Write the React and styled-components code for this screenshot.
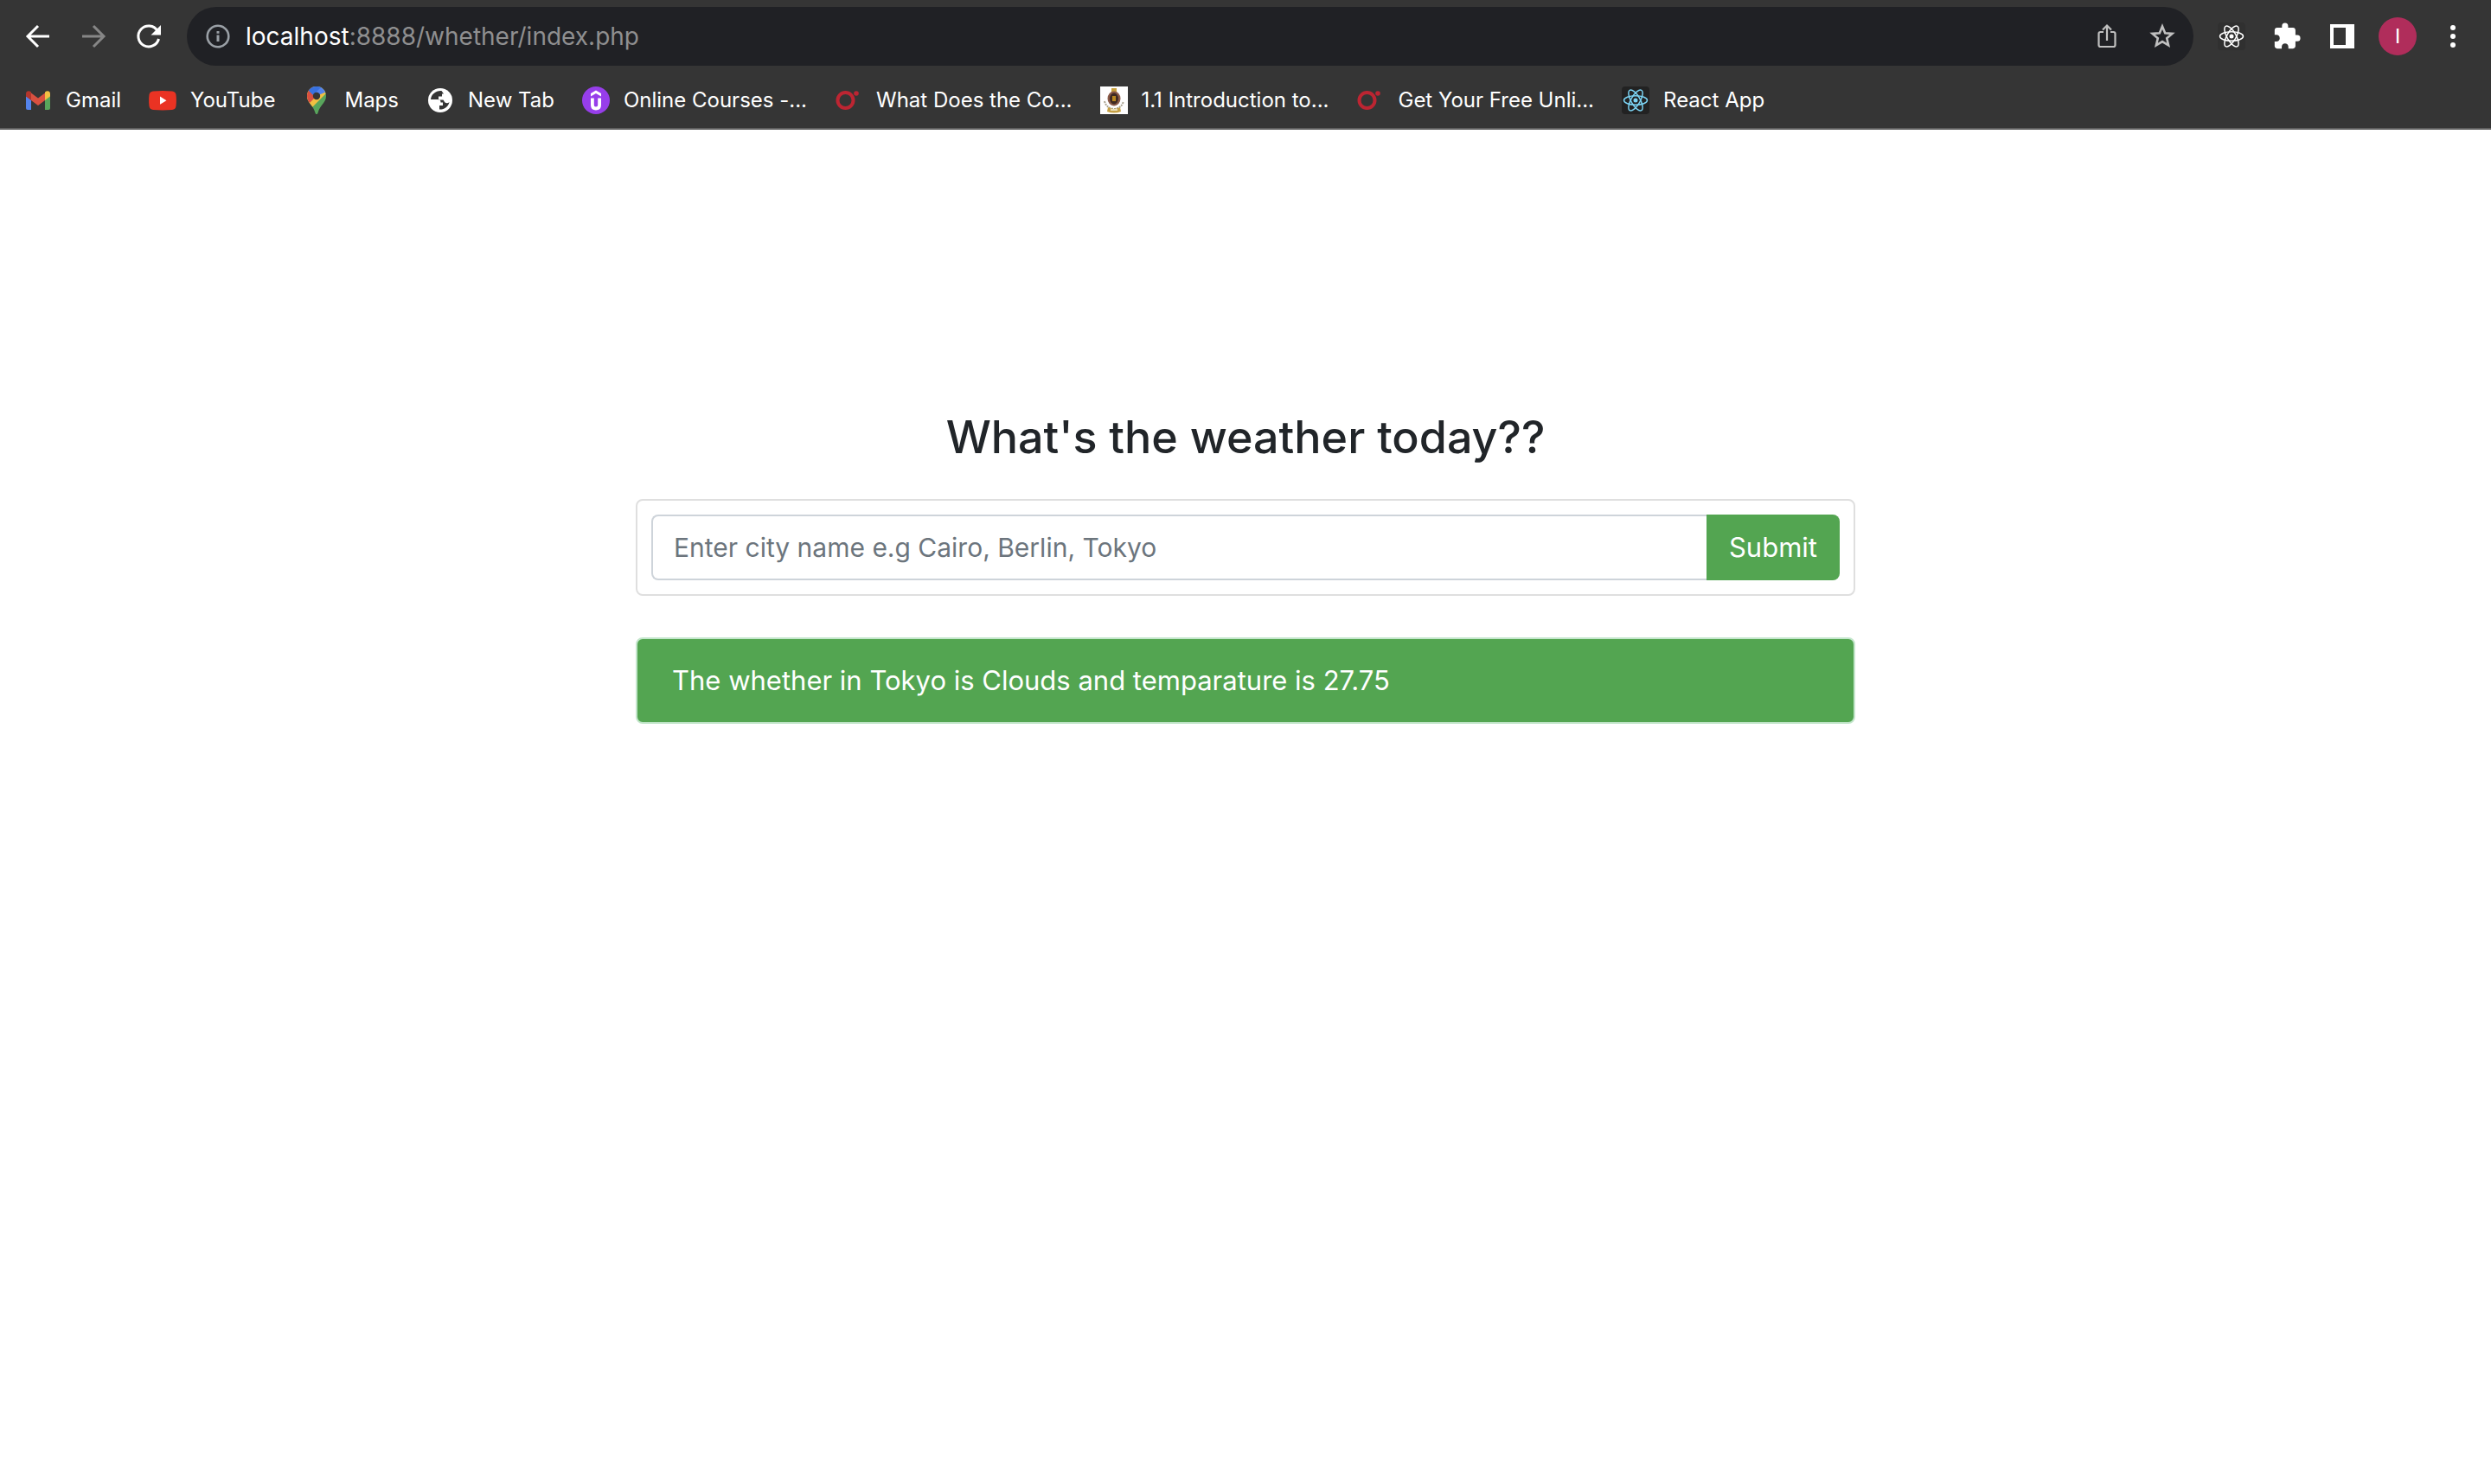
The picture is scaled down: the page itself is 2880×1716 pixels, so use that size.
import React from "react";
import styled, { createGlobalStyle } from "styled-components";

const Global = createGlobalStyle`
  *, *::before, *::after { box-sizing: border-box; }
  body { margin: 0; background: #fff; font-family: Inter, "Liberation Sans", sans-serif; }
`;

const Chrome = styled.header`
  background: #353535;
  border-bottom: 2px solid #5f5f5f;
`;
const Toolbar = styled.div`
  display: flex;
  align-items: center;
  padding: 8px 12px;
`;
const IconButton = styled.button`
  display: grid;
  place-items: center;
  flex: none;
  width: 64px;
  height: 64px;
  padding: 0;
  border: 0;
  background: none;
  color: ${(p) => p.$color || "#fff"};
`;
const AddressBar = styled.div`
  display: flex;
  align-items: center;
  flex: 1;
  height: 68px;
  margin: 0 12px;
  padding: 0 4px;
  border-radius: 34px;
  background: #202125;
`;
const Url = styled.div`
  flex: 1;
  font-size: 28px;
  line-height: 36px;
  color: #8f8f90;
`;
const Host = styled.span`
  color: #fff;
`;
const Avatar = styled.span`
  display: grid;
  place-items: center;
  width: 44px;
  height: 44px;
  border-radius: 50%;
  background: #b02d5b;
  color: #fff;
  font-size: 24px;
`;
const Bookmarks = styled.nav`
  display: flex;
  align-items: center;
  gap: 32px;
  height: 64px;
  padding: 0 28px;
`;
const Bookmark = styled.a`
  display: flex;
  align-items: center;
  gap: 16px;
  color: #fff;
  font-size: 24px;
  line-height: 32px;
  text-decoration: none;
  white-space: nowrap;
`;

const Page = styled.main`
  width: 1410px;
  max-width: 100%;
  margin: 0 auto;
  padding-top: 322px;
`;
const Title = styled.h1`
  margin: 0 0 37px;
  color: #212529;
  font-size: 52px;
  font-weight: 500;
  line-height: 68px;
  text-align: center;
`;
const Card = styled.form`
  display: flex;
  margin-bottom: 48px;
  padding: 16px;
  border: 2px solid #dfdfdf;
  border-radius: 8px;
`;
const City = styled.input`
  flex: 1;
  min-width: 0;
  height: 76px;
  padding: 0 24px;
  border: 2px solid #ced4da;
  border-right: 0;
  border-radius: 8px 0 0 8px;
  color: #212529;
  font: 30px/48px Inter, "Liberation Sans", sans-serif;
  &::placeholder { color: #6c757d; opacity: 1; }
`;
const Submit = styled.button`
  width: 154px;
  padding: 0;
  border: 0;
  border-radius: 0 8px 8px 0;
  background: #53a551;
  color: #fff;
  font: 31px/48px Inter, "Liberation Sans", sans-serif;
`;
const Alert = styled.p`
  margin: 0;
  padding: 24px 40px;
  border: 2px solid #c3e6cb;
  border-radius: 8px;
  background: #53a551;
  color: #fff;
  font-size: 31px;
  line-height: 48px;
`;

const Svg = ({ size = 32, box = size, children, ...rest }) => (
  <svg width={size} height={size} viewBox={`0 0 ${box} ${box}`} fill="none" aria-hidden="true" {...rest}>
    {children}
  </svg>
);
const Atom = ({ color, background, dot }) => (
  <Svg stroke={color} strokeWidth="1.5">
    <rect width="32" height="32" rx="4" fill={background} stroke="none" />
    <ellipse cx="16" cy="16" rx="13.5" ry="5.2" />
    <ellipse cx="16" cy="16" rx="13.5" ry="5.2" transform="rotate(60 16 16)" />
    <ellipse cx="16" cy="16" rx="13.5" ry="5.2" transform="rotate(120 16 16)" />
    <circle cx="16" cy="16" r={dot} fill={color} stroke="none" />
  </Svg>
);
const Gmail = () => (
  <Svg>
    <path d="M2 11l6 4.500V27H4a2 2 0 0 1-2-2z" fill="#5383ec" />
    <path d="M24 15.500L30 11v14a2 2 0 0 1-2 2h-4z" fill="#58a55c" />
    <path d="M8 7.500l8 6 8-6v8.500l-8 6-8-6z" fill="#d95040" />
    <path d="M2 8.500C2 5 5.500 4.200 8 6.500V16l-6-4.500z" fill="#b3362c" />
    <path d="M30 8.500C30 5 26.500 4.200 24 6.500V16l6-4.500z" fill="#f2bf42" />
  </Svg>
);
const YouTube = () => (
  <Svg>
    <path d="M5 5.500q11-1 22 0 4 .5 4.500 4 .8 6.500 0 13-.5 4-4.500 4.500-11 .8-22 0-4-.5-4.500-4.500-.8-6.500 0-13 .5-3.500 4.500-4z" fill="#ea3323" />
    <path d="M13 11.500l7.500 4.700-7.500 4.600z" fill="#fff" />
  </Svg>
);
const Maps = () => (
  <Svg>
    <clipPath id="pin"><path d="M16 0c6.200 0 11 4.800 11 11 0 8-6.500 9.500-9.500 19.500-.5 2-2.500 2-3 0C11.500 20.500 5 19 5 11 5 4.800 9.800 0 16 0z" /></clipPath>
    <g clipPath="url(#pin)">
      <path d="M0 0h32v32H0z" fill="#58a55c" />
      <path d="M0 0h32v3L9 26 0 22z" fill="#f2bf42" />
      <path d="M0 0h12l4 11-9 9-7-4z" fill="#d95040" />
      <path d="M7 3l9-5h14v7L16 11z" fill="#5383ec" />
      <path d="M6 4l8-6 6 2 1 1-9 9z" fill="#3871e0" />
    </g>
    <circle cx="16" cy="11" r="4.200" fill="#353535" />
  </Svg>
);
const Globe = () => (
  <Svg>
    <circle cx="16" cy="16" r="14" fill="#fff" />
    <path d="M17.500 5C11 4.500 5.500 9 5 15h8.500c2.500 0 3 1.500 3 3.500h2.500v3.500h-4v4.500c5 .5 10.500-3 11.500-8.500-1.500 1.500-3.500 1.500-5 .5-1.500-1-1-3-2.500-3h-5v-4h4V8.500h2z" fill="#353535" />
  </Svg>
);
const Udemy = () => (
  <Svg>
    <circle cx="16" cy="16" r="16" fill="#973eea" />
    <path d="M10 8l6-3.500L22 8v3.500l-6-3.500-6 3.500z" fill="#fff" />
    <path d="M11.900 13.500v8q0 4 4.100 4t4.100-4v-8" stroke="#fff" strokeWidth="3.800" />
  </Svg>
);
const Ring = () => (
  <Svg>
    <circle cx="12.500" cy="16" r="9" stroke="#bd2532" strokeWidth="4" />
    <circle cx="25" cy="8" r="2.800" fill="#bd2532" />
  </Svg>
);
const Crest = () => (
  <Svg>
    <path d="M0 0h32v32H0z" fill="#fff" />
    <path d="M13 2h6v4h-6z" fill="#c9a13b" />
    <ellipse cx="16" cy="14" rx="7.500" ry="8.500" fill="#8a5a48" />
    <ellipse cx="16" cy="14" rx="5" ry="6.500" fill="#3f2a22" />
    <path d="M14 11h4v6h-4z" fill="#b8861f" />
    <path d="M5 17q2 8 11 9 9-1 11-9" stroke="#aaa391" strokeWidth="2" strokeDasharray="2 1" />
    <path d="M9 24q7 4 14 0l1 5q-8 3-16 0z" fill="#c6a044" />
    <path d="M12 26h8v2h-8z" fill="#eadfb9" />
  </Svg>
);

const bookmarks = [
  ["Gmail", <Gmail />],
  ["YouTube", <YouTube />],
  ["Maps", <Maps />],
  ["New Tab", <Globe />],
  ["Online Courses -...", <Udemy />],
  ["What Does the Co...", <Ring />],
  ["1.1 Introduction to...", <Crest />],
  ["Get Your Free Unli...", <Ring />],
  ["React App", <Atom color="#7bd3f3" background="#222" dot={2.5} />],
];

export default function App() {
  return (
    <>
      <Global />
      <Chrome>
        <Toolbar>
          <IconButton aria-label="Back">
            <Svg stroke="currentColor" strokeWidth="3"><path d="M29 16H5M16 4L4 16l12 12" /></Svg>
          </IconButton>
          <IconButton aria-label="Forward" $color="#868686">
            <Svg stroke="currentColor" strokeWidth="3"><path d="M3 16h24M16 4l12 12-12 12" /></Svg>
          </IconButton>
          <IconButton aria-label="Reload">
            <Svg>
              <path d="M26 9.500A12 12 0 1 0 27.500 19" stroke="currentColor" strokeWidth="3" />
              <path d="M30 3v11.500H18.500z" fill="currentColor" />
            </Svg>
          </IconButton>
          <AddressBar>
            <IconButton aria-label="Site information" $color="#9aa0a6">
              <Svg>
                <circle cx="16" cy="16" r="12.300" stroke="currentColor" strokeWidth="2.600" />
                <path d="M14.500 14.500h3V22h-3zM14.500 10h3v2.800h-3z" fill="currentColor" />
              </Svg>
            </IconButton>
            <Url><Host>localhost</Host>:8888/whether/index.php</Url>
            <IconButton aria-label="Share" $color="#c0c0c0">
              <Svg stroke="currentColor" strokeWidth="2.200">
                <path d="M12 11H8.500Q6.500 11 6.500 13v13q0 2 2 2h15q2 0 2-2V13q0-2-2-2H20M16 21V4M11 8.500l5-5 5 5" />
              </Svg>
            </IconButton>
            <IconButton aria-label="Bookmark this page" $color="#c0c0c0">
              <Svg stroke="currentColor" strokeWidth="2.600">
                <path d="M16 4.500l3.200 7.700 8.300.7-6.300 5.400 1.900 8.100L16 22.100l-7.100 4.300 1.900-8.100-6.300-5.400 8.300-.7z" />
              </Svg>
            </IconButton>
          </AddressBar>
          <IconButton aria-label="React Developer Tools">
            <Atom color="#fff" background="#303030" dot={2.5} />
          </IconButton>
          <IconButton aria-label="Extensions">
            <Svg size={34} box={24}>
              <path fill="currentColor" d="M20.500 11H19V7c0-1.100-.9-2-2-2h-4V3.500a2.500 2.500 0 0 0-5 0V5H4c-1.100 0-1.990.9-1.990 2v3.800H3.500c1.490 0 2.700 1.210 2.700 2.700s-1.210 2.700-2.700 2.700H2V20c0 1.100.9 2 2 2h3.800v-1.500c0-1.490 1.210-2.700 2.700-2.700 1.490 0 2.700 1.210 2.700 2.700V22H17c1.100 0 2-.9 2-2v-4h1.500a2.500 2.500 0 0 0 0-5z" />
            </Svg>
          </IconButton>
          <IconButton aria-label="Side panel">
            <Svg><path fillRule="evenodd" d="M2 2h28v28H2zM6 6v20h14V6z" fill="currentColor" /></Svg>
          </IconButton>
          <IconButton aria-label="Profile"><Avatar>I</Avatar></IconButton>
          <IconButton aria-label="Menu">
            <Svg fill="currentColor">
              <circle cx="16" cy="6" r="3" /><circle cx="16" cy="16" r="3" /><circle cx="16" cy="26" r="3" />
            </Svg>
          </IconButton>
        </Toolbar>
        <Bookmarks aria-label="Bookmarks">
          {bookmarks.map(([name, icon]) => (
            <Bookmark key={name} href="#">{icon}{name}</Bookmark>
          ))}
        </Bookmarks>
      </Chrome>
      <Page>
        <Title>What's the weather today??</Title>
        <Card onSubmit={(e) => e.preventDefault()}>
          <City aria-label="City name" placeholder="Enter city name e.g Cairo, Berlin, Tokyo" />
          <Submit>Submit</Submit>
        </Card>
        <Alert role="status">The whether in Tokyo is Clouds and temparature is 27.75</Alert>
      </Page>
    </>
  );
}
